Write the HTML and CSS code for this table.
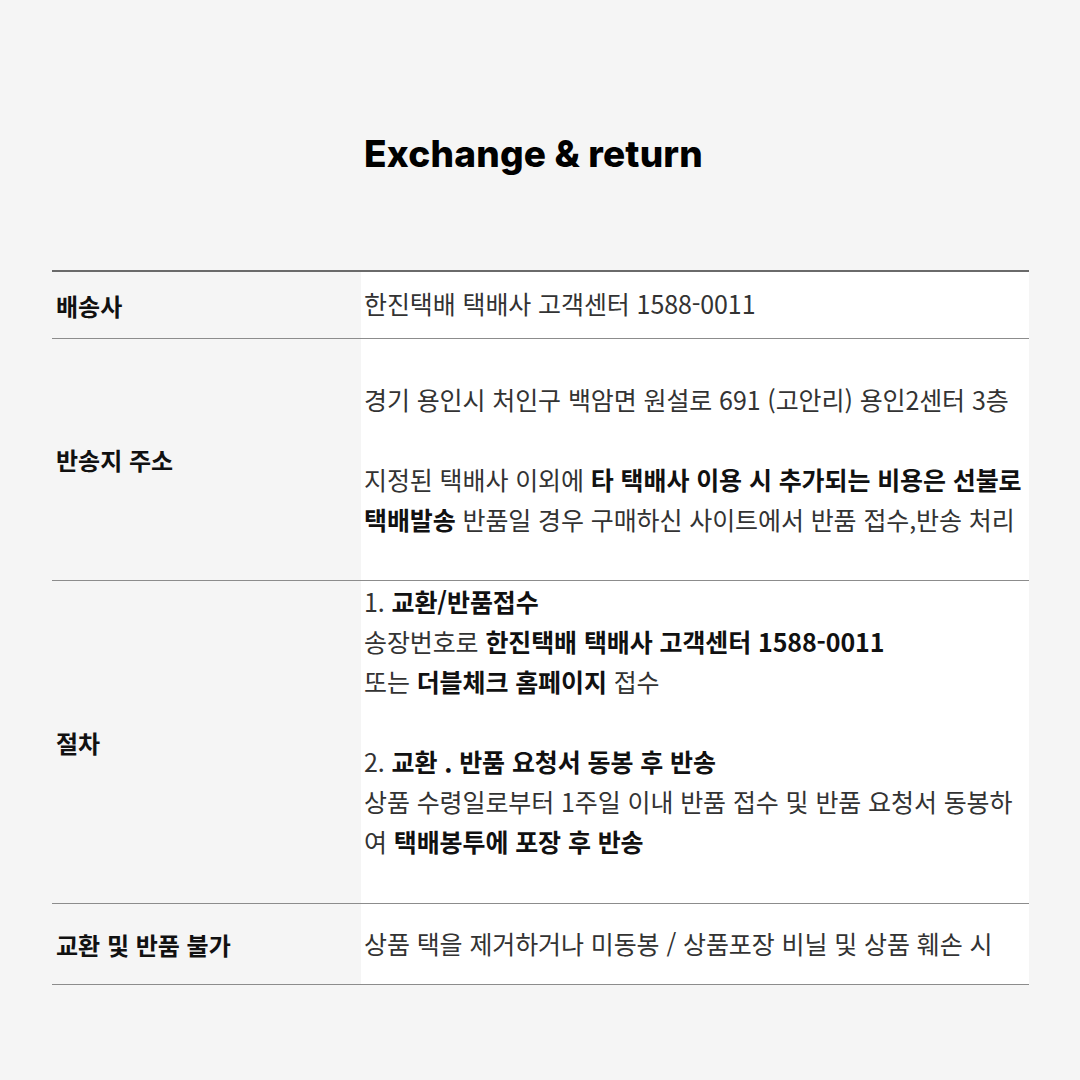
FILE: index.html
```html
<!DOCTYPE html>
<html lang="ko">
<head>
<meta charset="utf-8">
<title>Exchange &amp; return</title>
<link rel="stylesheet" href="styles.css">
</head>
<body>
<main class="page">
  <h1 class="title">Exchange &amp; return</h1>
  <div class="table">
    <div class="row row-1">
      <div class="label">배송사</div>
      <div class="content">한진택배 택배사 고객센터 1588-0011</div>
    </div>
    <div class="row row-2">
      <div class="label">반송지 주소</div>
      <div class="content">
        <p>경기 용인시 처인구 백암면 원설로 691 (고안리) 용인2센터 3층</p>
        <p class="gap"></p>
        <p>지정된 택배사 이외에 <b>타 택배사 이용 시 추가되는 비용은 선불로<br>택배발송</b> 반품일 경우 구매하신 사이트에서 반품 접수,반송 처리</p>
      </div>
    </div>
    <div class="row row-3">
      <div class="label">절차</div>
      <div class="content">
        <p>1. <b>교환/반품접수</b></p>
        <p>송장번호로 <b>한진택배 택배사 고객센터 1588-0011</b></p>
        <p>또는 <b>더블체크 홈페이지</b> 접수</p>
        <p class="gap"></p>
        <p>2. <b>교환 . 반품 요청서 동봉 후 반송</b></p>
        <p>상품 수령일로부터 1주일 이내 반품 접수 및 반품 요청서 동봉하<br>여 <b>택배봉투에 포장 후 반송</b></p>
      </div>
    </div>
    <div class="row row-4">
      <div class="label">교환 및 반품 불가</div>
      <div class="content">상품 택을 제거하거나 미동봉 / 상품포장 비닐 및 상품 훼손 시</div>
    </div>
  </div>
</main>
</body>
</html>
```

FILE: styles.css
```css
* { box-sizing: border-box; }
html, body {
  margin: 0;
  padding: 0;
  background: #f5f5f5;
}
body {
  font-family: "Noto Sans CJK KR", "Noto Sans", sans-serif;
  color: #222;
}
.page {
  padding: 130px 51px 0 52px;
}
.title {
  margin: 0 0 92px;
  padding-right: 14px;
  text-align: center;
  font-family: Inter, "Noto Sans", sans-serif;
  font-weight: 800;
  font-size: 37px;
  line-height: 48px;
  letter-spacing: 0.2px;
  color: #000;
}
.table {
  border-top: 2px solid #6a6a6a;
}
.row {
  display: grid;
  grid-template-columns: 309px 1fr;
  border-bottom: 1px solid #8c8c8c;
}
.label {
  display: flex;
  align-items: center;
  padding-left: 4px;
  font-weight: 700;
  font-size: 24px;
  color: #111;
}
.content {
  background: #fff;
  padding-left: 3px;
  font-size: 25px;
  line-height: 40px;
  color: #333;
  white-space: nowrap;
  letter-spacing: -0.1px;
}
.content p { margin: 0; }
.content p.gap { height: 40px; }
.content b { font-weight: 700; color: #111; }
.row-1 .content { padding-top: 11px; padding-bottom: 15px; }
.row-2 .content { padding-top: 40px; padding-bottom: 41px; }
.row-3 .content { padding-top: 0; padding-bottom: 42px; }
.row-4 .content { padding-top: 19px; padding-bottom: 21px; }
```
